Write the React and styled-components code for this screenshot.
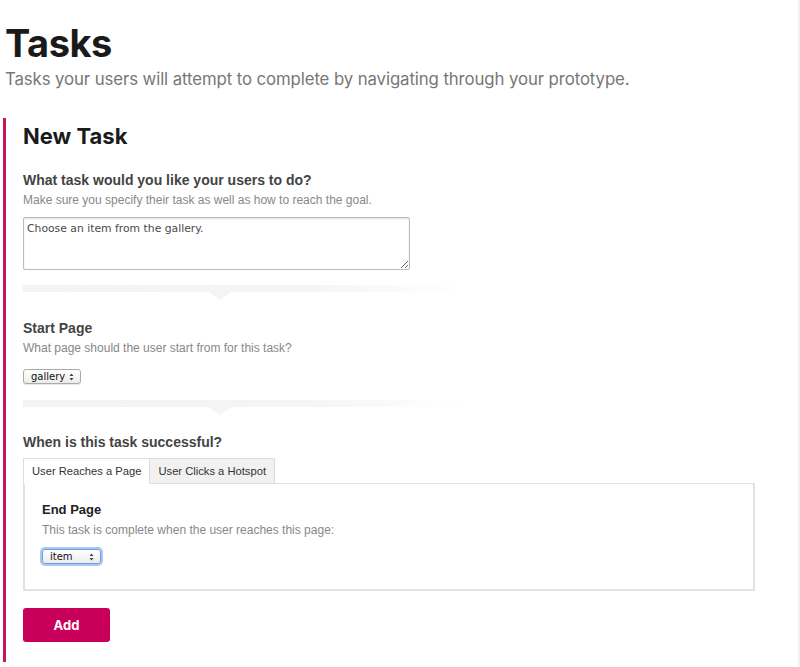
import React from 'react';
import styled, { createGlobalStyle } from 'styled-components';

const GlobalStyle = createGlobalStyle`
    body {
        margin: 0;
        background: #fff;
        font-family: "Liberation Sans", Arial, sans-serif;
    }
`;

const Page = styled.div`
    width: 800px;
    height: 667px;
    box-sizing: border-box;
    padding: 22px 0 0 5px;
    border-right: 2px solid #f2f2f2;
    overflow: hidden;
`;

const Title = styled.h1`
    margin: 0;
    font-family: Inter, "Noto Sans", sans-serif;
    font-weight: 700;
    font-size: 38px;
    line-height: 42px;
    letter-spacing: -0.5px;
    color: #1a1a1a;
`;

const Lead = styled.p`
    margin: 4px 0 0;
    font-family: Inter, "Noto Sans", sans-serif;
    font-size: 16.8px;
    line-height: 22px;
    color: #777;
    letter-spacing: -0.1px;
`;

const Section = styled.section`
    margin: 28px 0 0 -2px;
    border-left: 3px solid #c8145c;
    padding: 4px 0 20px 17px;
`;

const SectionTitle = styled.h2`
    margin: 0 0 21px;
    font-family: Inter, "Noto Sans", sans-serif;
    font-weight: 700;
    font-size: 22px;
    line-height: 28px;
    color: #1a1a1a;
`;

const Label = styled.div`
    font-weight: 700;
    font-size: ${p => (p.small ? '13px' : '14px')};
    line-height: 18px;
    color: ${p => (p.small ? '#222' : '#444')};
`;

const Hint = styled.div`
    margin-top: 3px;
    font-size: 12px;
    line-height: 16px;
    color: #888;
`;

const TextArea = styled.textarea`
    display: block;
    margin-top: 9px;
    width: 387px;
    height: 53px;
    box-sizing: border-box;
    padding: 4px 3px;
    border: 1px solid #bbb;
    border-radius: 2px;
    box-shadow: inset 0 1px 2px rgba(0, 0, 0, 0.12);
    font-family: "DejaVu Sans", sans-serif;
    font-size: 10.8px;
    color: #555;
    resize: vertical;
    &::placeholder { color: #4a4a4a; }
`;

const Divider = styled.div`
    position: relative;
    margin: ${p => p.top}px 0 ${p => p.bottom}px;
    width: 440px;
    height: 7px;
    background: linear-gradient(to right, #f3f3f3, #f5f5f5 65%, rgba(255, 255, 255, 0));
    &::after {
        content: '';
        position: absolute;
        left: 186px;
        top: 7px;
        width: 0;
        height: 0;
        border-left: 11px solid transparent;
        border-right: 11px solid transparent;
        border-top: 8px solid #f5f5f5;
    }
`;

const SelectBox = styled.div`
    margin-top: ${p => p.top}px;
    display: inline-flex;
    align-items: center;
    justify-content: space-between;
    box-sizing: border-box;
    width: ${p => p.width}px;
    height: 15px;
    padding: 0 6px 0 7px;
    border: 1px solid ${p => (p.focused ? '#6b9be0' : '#aaa')};
    border-radius: 3px;
    background: linear-gradient(#fff, #ececec);
    box-shadow: ${p => (p.focused ? '0 0 0 2px #a9c8f0' : '0 1px 1px rgba(0,0,0,0.1)')};
    font-family: "DejaVu Sans", sans-serif;
    font-size: 10px;
    color: #111;
`;

const Arrows = () => (
    <svg width="5" height="8" viewBox="0 0 5 8">
        <path d="M0.5 3 L2.5 0.5 L4.5 3 Z M0.5 5 L2.5 7.5 L4.5 5 Z" fill="#444" />
    </svg>
);

const Tabs = styled.div`
    margin-top: 7px;
    display: flex;
    width: 732px;
`;

const Tab = styled.div`
    height: 26px;
    box-sizing: border-box;
    padding: 0 8px;
    display: flex;
    align-items: center;
    font-size: 11.2px;
    color: #333;
    border: 1px solid #ddd;
    border-bottom: ${p => (p.active ? '1px solid #fff' : '1px solid #ddd')};
    border-left: ${p => (p.first ? '1px solid #ddd' : 'none')};
    background: ${p => (p.active ? '#fff' : '#f1f1f1')};
    margin-bottom: -1px;
    position: relative;
    z-index: 1;
`;

const TabPanel = styled.div`
    width: 732px;
    height: 108px;
    box-sizing: border-box;
    padding: 17px 17px;
    border: 2px solid #e2e2e2;
    border-top-width: 1px;
`;

const AddButton = styled.button`
    margin-top: 17px;
    width: 87px;
    height: 34px;
    border: none;
    border-radius: 3px;
    background: #c9005b;
    color: #fff;
    font-family: Inter, "Noto Sans", sans-serif;
    font-weight: 700;
    font-size: 13px;
    cursor: pointer;
`;

export default function App() {
    return (
        <>
            <GlobalStyle />
            <Page>
                <Title>Tasks</Title>
                <Lead>Tasks your users will attempt to complete by navigating through your prototype.</Lead>
                <Section>
                    <SectionTitle>New Task</SectionTitle>

                    <Label>What task would you like your users to do?</Label>
                    <Hint>Make sure you specify their task as well as how to reach the goal.</Hint>
                    <TextArea placeholder="Choose an item from the gallery." />

                    <Divider top={15} bottom={27} />

                    <Label>Start Page</Label>
                    <Hint>What page should the user start from for this task?</Hint>
                    <SelectBox width={58} top={13}>gallery <Arrows /></SelectBox>

                    <Divider top={16} bottom={26} />

                    <Label>When is this task successful?</Label>
                    <Tabs>
                        <Tab active first>User Reaches a Page</Tab>
                        <Tab>User Clicks a Hotspot</Tab>
                    </Tabs>
                    <TabPanel>
                        <Label small>End Page</Label>
                        <Hint>This task is complete when the user reaches this page:</Hint>
                        <SelectBox width={59} top={11} focused>item <Arrows /></SelectBox>
                    </TabPanel>

                    <AddButton>Add</AddButton>
                </Section>
            </Page>
        </>
    );
}
